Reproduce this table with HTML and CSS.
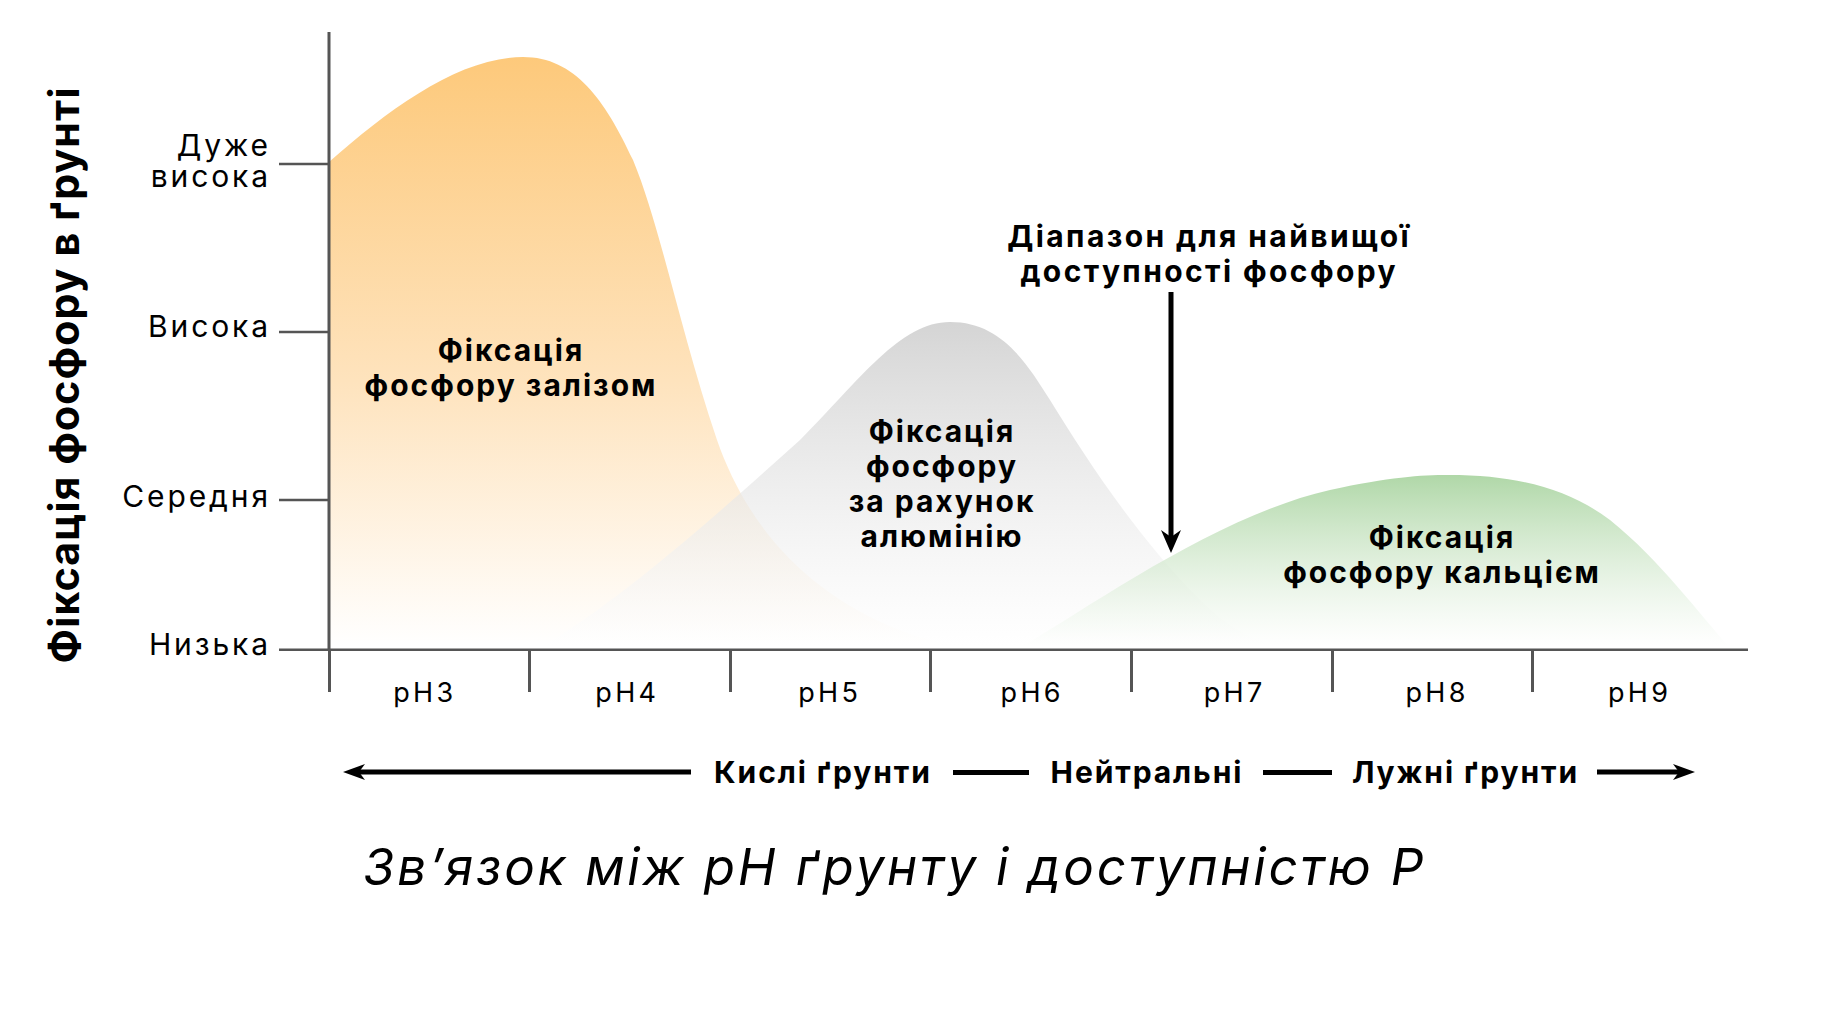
FILE: index.html
```html
<!DOCTYPE html>
<html lang="uk">
<head>
<meta charset="utf-8">
<title>Зв’язок між pH ґрунту і доступністю P</title>
<link rel="stylesheet" href="styles.css">
</head>
<body>
<div class="page">
  <div class="chart">
    <svg class="plot" width="1845" height="651" viewBox="0 0 1845 651" xmlns="http://www.w3.org/2000/svg">
      <defs>
        <linearGradient id="gOrange" gradientUnits="userSpaceOnUse" x1="0" y1="57" x2="0" y2="646">
          <stop offset="0" stop-color="#fdc97b"/>
          <stop offset="0.55" stop-color="#fee3bd"/>
          <stop offset="1" stop-color="#ffffff"/>
        </linearGradient>
        <linearGradient id="gGray" gradientUnits="userSpaceOnUse" x1="0" y1="322" x2="0" y2="646">
          <stop offset="0" stop-color="#cdcdcd"/>
          <stop offset="1" stop-color="#ffffff" stop-opacity="0.6"/>
        </linearGradient>
        <linearGradient id="gGreen" gradientUnits="userSpaceOnUse" x1="0" y1="475" x2="0" y2="646">
          <stop offset="0" stop-color="#a7d39e"/>
          <stop offset="1" stop-color="#ffffff" stop-opacity="0.6"/>
        </linearGradient>
      </defs>
      <path d="M329,162 C390,108 460,57 523,57 C575,57 605,100 633,160 C660,225 680,330 717,440 C745,520 800,590 899,630 C930,642 960,647 990,648 L329,648 Z" fill="url(#gOrange)"/>
      <path d="M540,648 C620,600 700,530 800,440 C860,380 900,322 950,322 C1000,322 1025,360 1050,400 C1090,465 1140,540 1200,600 C1230,630 1260,645 1290,648 Z" fill="url(#gGray)" fill-opacity="0.85"/>
      <path d="M1020,648 C1100,600 1220,515 1330,490 C1390,477 1420,475 1449,475 C1520,475 1570,490 1610,520 C1660,560 1700,615 1730,648 Z" fill="url(#gGreen)" fill-opacity="0.9"/>
      <g stroke="#555" stroke-width="3">
        <line x1="329" y1="32" x2="329" y2="651"/>
        <line x1="279" y1="650" x2="1748" y2="650"/>
        <line x1="279" y1="164" x2="329" y2="164" stroke-width="2.5"/>
        <line x1="279" y1="332" x2="329" y2="332" stroke-width="2.5"/>
        <line x1="279" y1="500" x2="329" y2="500" stroke-width="2.5"/>
      </g>
      <line x1="1171" y1="292" x2="1171" y2="542" stroke="#000" stroke-width="5"/>
      <path d="M1171,553 L1161,530 L1171,537 L1181,530 Z" fill="#000"/>
    </svg>

    <div class="ytitle">Фіксація фосфору в ґрунті</div>

    <div class="ylab ylab-vhigh"><span class="ylab-line">Дуже</span><span class="ylab-line">висока</span></div>
    <div class="ylab ylab-high">Висока</div>
    <div class="ylab ylab-mid">Середня</div>
    <div class="ylab ylab-low">Низька</div>

    <div class="note note-fe">Фіксація<br>фосфору залізом</div>
    <div class="note note-al">Фіксація<br>фосфору<br>за рахунок<br>алюмінію</div>
    <div class="note note-range">Діапазон для найвищої<br>доступності фосфору</div>
    <div class="note note-ca">Фіксація<br>фосфору кальцієм</div>
  </div>

  <div class="xaxis">
    <div class="xcell"><span class="tick"></span><span class="ph">pH3</span></div>
    <div class="xcell"><span class="tick"></span><span class="ph">pH4</span></div>
    <div class="xcell"><span class="tick"></span><span class="ph">pH5</span></div>
    <div class="xcell"><span class="tick"></span><span class="ph">pH6</span></div>
    <div class="xcell"><span class="tick"></span><span class="ph">pH7</span></div>
    <div class="xcell"><span class="tick"></span><span class="ph">pH8</span></div>
    <div class="xcell"><span class="tick"></span><span class="ph">pH9</span></div>
  </div>

  <div class="scale">
    <svg class="arrow arrow-left" width="348" height="20" viewBox="0 0 348 20" xmlns="http://www.w3.org/2000/svg">
      <rect x="14" y="7.5" width="334" height="5" fill="#000"/>
      <path d="M0,10 L22,2 L16,10 L22,18 Z" fill="#000"/>
    </svg>
    <span class="scale-text scale-acid">Кислі ґрунти</span>
    <span class="dash dash-1"></span>
    <span class="scale-text scale-neutral">Нейтральні</span>
    <span class="dash dash-2"></span>
    <span class="scale-text scale-alk">Лужні ґрунти</span>
    <svg class="arrow arrow-right" width="98" height="20" viewBox="0 0 98 20" xmlns="http://www.w3.org/2000/svg">
      <rect x="0" y="7.5" width="84" height="5" fill="#000"/>
      <path d="M98,10 L76,2 L82,10 L76,18 Z" fill="#000"/>
    </svg>
  </div>

  <h1 class="title">Зв’язок між pH ґрунту і доступністю P</h1>
</div>
</body>
</html>
```

FILE: styles.css
```css
html, body {
  margin: 0;
  padding: 0;
  background: #ffffff;
}

body {
  font-family: Inter, "Noto Sans", "DejaVu Sans", sans-serif;
  color: #000;
  width: 1845px;
  height: 1014px;
  overflow: hidden;
}

.page {
  width: 1845px;
}

.chart {
  position: relative;
  height: 651px;
}

.plot {
  position: absolute;
  left: 0;
  top: 0;
  display: block;
}

.ytitle {
  position: absolute;
  left: -225px;
  top: 355px;
  width: 577px;
  height: 42px;
  line-height: 42px;
  font-size: 41px;
  font-weight: 700;
  text-align: center;
  white-space: nowrap;
  letter-spacing: 1.2px;
  padding-left: 1.2px;
  box-sizing: border-box;
  transform: rotate(-90deg);
}

.ylab {
  position: absolute;
  left: 0;
  width: 271px;
  text-align: right;
  font-size: 30px;
  line-height: 31px;
  font-weight: 400;
  letter-spacing: 2.9px;
  white-space: nowrap;
}

.ylab-line {
  display: block;
  height: 31px;
  line-height: 31px;
}

.ylab-vhigh { top: 130px; }
.ylab-high  { top: 311px; }
.ylab-mid   { top: 481px; }
.ylab-low   { top: 629px; }

.note {
  position: absolute;
  font-size: 30px;
  line-height: 35px;
  font-weight: 700;
  text-align: center;
  white-space: nowrap;
  letter-spacing: 2px;
  padding-left: 2px;
  transform: translateX(-50%);
}

.note-fe    { left: 510px;  top: 333px; }
.note-al    { left: 941px;  top: 414px; }
.note-range { left: 1208px; top: 219px; letter-spacing: 2.4px; padding-left: 2.4px; }
.note-ca    { left: 1441px; top: 520px; }

.xaxis {
  display: grid;
  grid-template-columns: repeat(7, 200.67px);
  margin-left: 327.5px;
}

.xcell {
  display: grid;
}

.tick {
  grid-area: 1 / 1;
  justify-self: start;
  width: 3px;
  height: 41px;
  background: #555;
}

.ph {
  grid-area: 1 / 1;
  justify-self: center;
  padding-top: 27px;
  padding-right: 6px;
  font-size: 27px;
  line-height: 30px;
  letter-spacing: 3.3px;
}

.xcell:nth-child(2) .ph { margin-left: 3.6px; }
.xcell:nth-child(3) .ph { margin-left: 7.2px; }
.xcell:nth-child(4) .ph { margin-left: 10.8px; }
.xcell:nth-child(5) .ph { margin-left: 14.4px; }
.xcell:nth-child(6) .ph { margin-left: 18px; }
.xcell:nth-child(7) .ph { margin-left: 21.6px; }

.scale {
  display: flex;
  align-items: center;
  gap: 18px;
  height: 40px;
  margin-top: 44px;
  padding-left: 343px;
}

.arrow {
  display: block;
  flex: none;
}

.scale-text {
  flex: none;
  font-size: 30px;
  line-height: 40px;
  font-weight: 700;
  text-align: center;
  white-space: nowrap;
  letter-spacing: 1.9px;
  padding-left: 1.9px;
  box-sizing: border-box;
}

.scale-acid    { width: 226px; }
.scale-neutral { width: 198px; }
.scale-alk     { width: 229px; }

.dash {
  flex: none;
  height: 5px;
  background: #000;
}

.dash-1 { width: 76px; }
.dash-2 { width: 69px; }

.title {
  margin: 45px 0 0 0;
  padding-left: 363px;
  font-size: 51px;
  line-height: 60px;
  font-weight: 400;
  font-style: italic;
  letter-spacing: 2.8px;
  white-space: nowrap;
}
```
